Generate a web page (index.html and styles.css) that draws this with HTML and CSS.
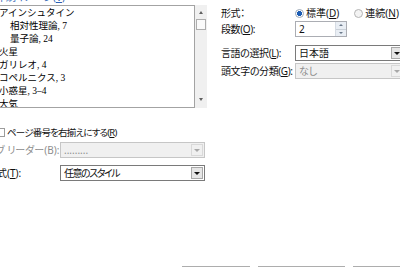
FILE: index.html
```html
<!DOCTYPE html>
<html lang="ja">
<head>
    <meta charset="UTF-8">
    <title>索引</title>
    <link rel="stylesheet" href="styles.css">
</head>
<body>
    <div class="main">
        <div class="left">
            <div class="caption">印刷イメージ(<u>V</u>)</div>
            <div class="preview">
                <div class="preview-list">
                    <div>アインシュタイン</div>
                    <div class="sub">相対性理論, 7</div>
                    <div class="sub">量子論, 24</div>
                    <div>火星</div>
                    <div>ガリレオ, 4</div>
                    <div>コペルニクス, 3</div>
                    <div>小惑星, 3–4</div>
                    <div>大気</div>
                </div>
                <div class="scrollbar">
                    <span class="scroll-arrow up"></span>
                    <span class="scroll-thumb"></span>
                    <span class="scroll-space"></span>
                    <span class="scroll-arrow down"></span>
                </div>
            </div>
            <div class="check-row">
                <span class="checkbox"></span>
                <span class="check-text">ページ番号を右揃えにする(<u>R</u>)</span>
            </div>
            <div class="field-row leader disabled">
                <span class="field-label">タブ リーダー(B):</span>
                <div class="combo">
                    <span class="combo-text">.........</span>
                    <span class="combo-btn"></span>
                </div>
            </div>
            <div class="field-row format">
                <span class="field-label">書式(<u>T</u>):</span>
                <div class="combo">
                    <span class="combo-text tighter">任意のスタイル</span>
                    <span class="combo-btn"></span>
                </div>
            </div>
        </div>

        <div class="right">
            <div class="row row-type">
                <span class="row-label">形式：</span>
                <span class="option">
                    <span class="radio on"></span>
                    <span>標準(<u>D</u>)</span>
                </span>
                <span class="option">
                    <span class="radio"></span>
                    <span>連続(<u>N</u>)</span>
                </span>
            </div>
            <div class="row row-columns">
                <span class="row-label">段数(<u>O</u>):</span>
                <div class="spin">
                    <span class="spin-value">2</span>
                    <span class="spin-btns">
                        <span class="up"></span>
                        <span class="down"></span>
                    </span>
                </div>
            </div>
            <div class="row row-lang">
                <span class="row-label">言語の選択(<u>L</u>):</span>
                <div class="combo wide">
                    <span class="combo-text">日本語</span>
                    <span class="combo-btn"></span>
                </div>
            </div>
            <div class="row row-group">
                <span class="row-label">頭文字の分類(<u>G</u>):</span>
                <div class="combo wide disabled">
                    <span class="combo-text">なし</span>
                    <span class="combo-btn"></span>
                </div>
            </div>
        </div>
    </div>

    <div class="buttons">
        <button class="btn-mark">索引登録(<u>K</u>)...</button>
        <button class="btn-auto">自動登録(<u>U</u>)...</button>
        <button class="btn-change">変更(<u>Y</u>)...</button>
    </div>
</body>
</html>
```

FILE: styles.css
```css
/* ダイアログ全体 */
* {
    box-sizing: border-box;
}

body {
    margin: 0;
    width: 400px;
    height: 267px;
    overflow: hidden;
    background: #fff;
    font-family: "Noto Sans", "Noto Sans CJK JP", sans-serif;
    font-size: 10px;
    line-height: 13px;
    font-feature-settings: "palt";
    color: #111;
}

u {
    text-underline-offset: 1px;
}

.tighter {
    letter-spacing: -1.5px;
}

.main {
    display: flex;
    gap: 14px;
    height: 266px;
}

/* 左側: 印刷イメージ */
.left {
    flex: none;
    width: 220px;
    margin-left: -13px;
    display: flex;
    flex-direction: column;
}

.caption {
    height: 13px;
    margin: -9px 0 0 9px;
    color: #2b5fb3;
    white-space: nowrap;
}

.preview {
    display: flex;
    height: 103px;
    margin: 1px 0 0 11px;
}

.preview-list {
    width: 197px;
    border: 1px solid #a3a3a3;
    padding-top: 1px;
    overflow: hidden;
    font-family: "Liberation Serif", "Noto Sans CJK JP", serif;
    font-size: 9.5px;
    font-feature-settings: normal;
    line-height: 13px;
    color: #000;
    white-space: nowrap;
}

.preview-list .sub {
    padding-left: 11px;
}

.scrollbar {
    width: 12px;
    background: #f0f0f0;
    display: flex;
    flex-direction: column;
    align-items: center;
    padding-bottom: 2px;
}

.scroll-arrow {
    width: 100%;
    height: 14px;
    display: flex;
    align-items: center;
    justify-content: center;
}

.scroll-arrow::before {
    content: "";
    border-left: 2.5px solid transparent;
    border-right: 2.5px solid transparent;
}

.scroll-arrow.up::before {
    border-bottom: 3px solid #606060;
}

.scroll-arrow.down::before {
    border-top: 3px solid #606060;
}

.scroll-thumb {
    width: 10px;
    height: 11px;
    border: 1px solid #adadad;
    background: #fafafa;
}

.scroll-space {
    flex: 1;
}

.check-row {
    display: flex;
    align-items: center;
    gap: 2px;
    height: 13px;
    margin: 18px 0 0 9px;
    white-space: nowrap;
}

.check-text {
    font-size: 9.5px;
    letter-spacing: -0.8px;
}

.checkbox {
    flex: none;
    width: 9px;
    height: 9px;
    border: 1px solid #9c9c9c;
    background: #fff;
}

.field-row {
    display: flex;
    align-items: center;
    height: 16px;
}

.field-row.leader {
    margin-top: 3px;
}

.field-row.format {
    margin-top: 7px;
}

.field-label {
    flex: none;
    width: 73px;
    white-space: nowrap;
    overflow: hidden;
}

.disabled,
.disabled .combo-text {
    color: #8d8d8d;
}

/* コンボボックス */
.combo {
    flex: none;
    width: 145px;
    height: 16px;
    border: 1px solid #7a7a7a;
    background: #fff;
    display: flex;
    align-items: center;
    padding-left: 3px;
    color: #111;
}

.combo.wide {
    width: 110px;
}

.combo-text {
    flex: 1;
    white-space: nowrap;
    line-height: 14px;
}

.combo-btn {
    flex: none;
    width: 12px;
    height: 12px;
    margin-right: 1px;
    border: 1px solid #a8a8a8;
    background: #e6e6e6;
    display: flex;
    align-items: center;
    justify-content: center;
}

.combo-btn::before {
    content: "";
    border-left: 3px solid transparent;
    border-right: 3px solid transparent;
    border-top: 3px solid #111;
}

.disabled .combo,
.combo.disabled {
    border-color: #c6c6c6;
    background: #f0f0f0;
}

.disabled .combo-btn,
.combo.disabled .combo-btn {
    border-color: #d9d9d9;
    background: #f0f0f0;
}

.disabled .combo-btn::before,
.combo.disabled .combo-btn::before {
    border-top-color: #a8a8a8;
}

/* 右側: 書式設定 */
.right {
    flex: none;
    width: 190px;
    display: flex;
    flex-direction: column;
}

.row {
    display: flex;
    align-items: center;
    height: 16px;
}

.row-label {
    flex: none;
    width: 74px;
    white-space: nowrap;
    letter-spacing: -0.4px;
}

.row-type {
    height: 13px;
    margin-top: 7px;
}

.row-columns {
    margin-top: 1px;
}

.row-lang {
    margin-top: 8px;
}

.row-group {
    margin-top: 2px;
}

.option {
    display: flex;
    align-items: center;
    gap: 2px;
    margin-right: 15px;
    white-space: nowrap;
}

.radio {
    flex: none;
    width: 9px;
    height: 9px;
    border-radius: 50%;
    border: 1px solid #b4b4b4;
    background: #f3f3f3;
}

.radio.on {
    border-color: #9aa7b6;
    background: radial-gradient(circle, #1d5db4 0 2.3px, #fff 2.8px);
}

.spin {
    width: 52px;
    height: 16px;
    border: 1px solid #abadb3;
    display: flex;
}

.spin-value {
    flex: 1;
    padding-left: 3px;
    line-height: 14px;
}

.spin-btns {
    width: 11px;
    display: flex;
    flex-direction: column;
    border-left: 1px solid #d5dbe3;
    background: #e9eef4;
}

.spin-btns span {
    flex: 1;
    display: flex;
    align-items: center;
    justify-content: center;
}

.spin-btns span + span {
    border-top: 1px solid #c9d0d8;
}

.spin-btns span::before {
    content: "";
    border-left: 2px solid transparent;
    border-right: 2px solid transparent;
}

.spin-btns .up::before {
    border-bottom: 2px solid #6d7b8c;
}

.spin-btns .down::before {
    border-top: 2px solid #6d7b8c;
}

/* 下のボタン */
.buttons {
    display: flex;
    gap: 8px;
    padding-left: 182px;
}

.buttons button {
    flex: none;
    height: 21px;
    padding: 0;
    border: 1px solid #adadad;
    background: #e1e1e1;
    font-family: inherit;
    font-size: 9px;
    color: #111;
    white-space: nowrap;
    overflow: hidden;
}

.btn-mark {
    width: 68px;
}

.btn-auto {
    width: 87px;
}

.btn-change {
    width: 70px;
}
```
